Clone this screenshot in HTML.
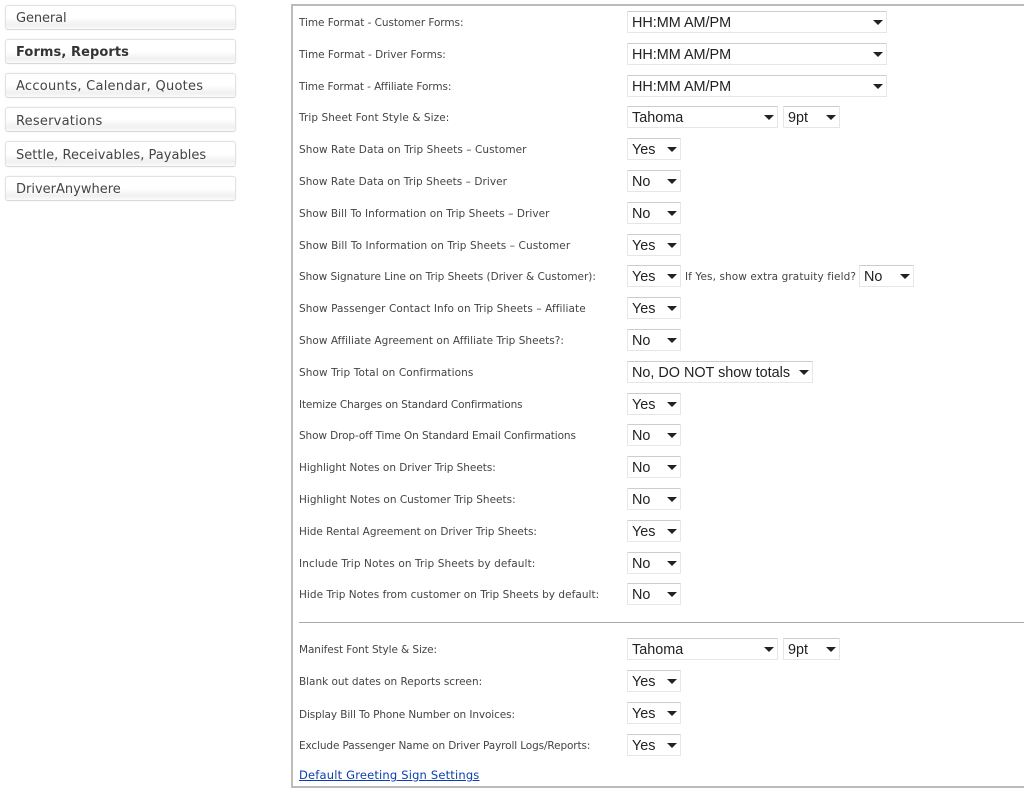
<!DOCTYPE html>
<html><head><meta charset="utf-8"><style>
html,body{margin:0;padding:0;background:#fff}
#p{position:relative;width:1024px;height:795px;overflow:hidden;background:#fff}
.n{position:absolute;left:5px;height:23px;border:1px solid #e2e2e2;border-bottom-color:#d8d8d8;border-radius:3px;box-shadow:0 0 1px #ddd;background:linear-gradient(#fff 0,#fff 50%,#f0f0f0 82%,#fbfbfb 100%);font:13px/25px "DejaVu Sans",sans-serif;color:#444;padding-left:10px;box-sizing:content-box;width:219px;white-space:nowrap}
.l{position:absolute;left:299px;font:10.5px/14px "DejaVu Sans",sans-serif;color:#444;white-space:nowrap;letter-spacing:-.03px}
.s{position:absolute;height:20px;border:1px solid #e6e6e6;border-top-color:#ccc;border-radius:1px;background:#fff;font:14.4px/22px "Liberation Sans",sans-serif;color:#222;box-sizing:content-box;white-space:nowrap}
.s span{position:absolute;left:4px;top:0}
.s i{position:absolute;right:3px;top:8px;width:0;height:0;border-left:5px solid transparent;border-right:5px solid transparent;border-top:5px solid #222}
</style></head><body><div id="p">
<div class="n" style="top:5px;letter-spacing:-.1px">General</div>
<div class="n" style="top:39px;font-weight:bold;color:#333;letter-spacing:.08px">Forms, Reports</div>
<div class="n" style="top:73px;letter-spacing:.26px">Accounts, Calendar, Quotes</div>
<div class="n" style="top:107px;line-height:27px;letter-spacing:.22px">Reservations</div>
<div class="n" style="top:141px;line-height:27px;height:24px;letter-spacing:.02px">Settle, Receivables, Payables</div>
<div class="n" style="top:176px;letter-spacing:0">DriverAnywhere</div>

<div style="position:absolute;left:291px;top:4px;width:740px;height:784px;border:2px solid #bbb;border-right:0;box-sizing:border-box"></div>
<div style="position:absolute;left:299px;top:622px;width:725px;height:1px;background:#aaa"></div>

<div class="l" style="top:16px;letter-spacing:-.065px">Time Format - Customer Forms:</div>
<div class="l" style="top:48px">Time Format - Driver Forms:</div>
<div class="l" style="top:80px;letter-spacing:-.1px">Time Format - Affiliate Forms:</div>
<div class="l" style="top:111px;letter-spacing:.07px">Trip Sheet Font Style &amp; Size:</div>
<div class="l" style="top:143px;letter-spacing:.07px">Show Rate Data on Trip Sheets – Customer</div>
<div class="l" style="top:175px;letter-spacing:.05px">Show Rate Data on Trip Sheets – Driver</div>
<div class="l" style="top:207px;letter-spacing:.05px">Show Bill To Information on Trip Sheets – Driver</div>
<div class="l" style="top:239px;letter-spacing:.09px">Show Bill To Information on Trip Sheets – Customer</div>
<div class="l" style="top:270px">Show Signature Line on Trip Sheets (Driver &amp; Customer):</div>
<div class="l" style="top:302px;letter-spacing:.08px">Show Passenger Contact Info on Trip Sheets – Affiliate</div>
<div class="l" style="top:334px;letter-spacing:.03px">Show Affiliate Agreement on Affiliate Trip Sheets?:</div>
<div class="l" style="top:366px;letter-spacing:.095px">Show Trip Total on Confirmations</div>
<div class="l" style="top:398px;letter-spacing:-.15px">Itemize Charges on Standard Confirmations</div>
<div class="l" style="top:429px;letter-spacing:-.11px">Show Drop-off Time On Standard Email Confirmations</div>
<div class="l" style="top:461px">Highlight Notes on Driver Trip Sheets:</div>
<div class="l" style="top:493px;letter-spacing:0">Highlight Notes on Customer Trip Sheets:</div>
<div class="l" style="top:525px">Hide Rental Agreement on Driver Trip Sheets:</div>
<div class="l" style="top:557px;letter-spacing:.105px">Include Trip Notes on Trip Sheets by default:</div>
<div class="l" style="top:588px;letter-spacing:.04px">Hide Trip Notes from customer on Trip Sheets by default:</div>
<div class="l" style="top:643px;letter-spacing:-.1px">Manifest Font Style &amp; Size:</div>
<div class="l" style="top:675px">Blank out dates on Reports screen:</div>
<div class="l" style="top:708px;letter-spacing:-.1px">Display Bill To Phone Number on Invoices:</div>
<div class="l" style="top:739px;letter-spacing:-.12px">Exclude Passenger Name on Driver Payroll Logs/Reports:</div>
<div class="l" style="top:768px;font-size:11.5px;letter-spacing:.18px;color:#0b3fb0;text-decoration:underline">Default Greeting Sign Settings</div>
<div class="l" style="left:685px;top:270px;letter-spacing:.09px">If Yes, show extra gratuity field?</div>

<div class="s" style="left:627px;top:11px;width:258px"><span>HH:MM AM/PM</span><i></i></div>
<div class="s" style="left:627px;top:43px;width:258px"><span>HH:MM AM/PM</span><i></i></div>
<div class="s" style="left:627px;top:75px;width:258px"><span>HH:MM AM/PM</span><i></i></div>
<div class="s" style="left:627px;top:106px;width:149px"><span>Tahoma</span><i></i></div>
<div class="s" style="left:783px;top:106px;width:55px"><span>9pt</span><i></i></div>
<div class="s" style="left:627px;top:138px;width:52px"><span>Yes</span><i></i></div>
<div class="s" style="left:627px;top:170px;width:52px"><span>No</span><i></i></div>
<div class="s" style="left:627px;top:202px;width:52px"><span>No</span><i></i></div>
<div class="s" style="left:627px;top:234px;width:52px"><span>Yes</span><i></i></div>
<div class="s" style="left:627px;top:265px;width:52px"><span>Yes</span><i></i></div>
<div class="s" style="left:859px;top:265px;width:53px"><span>No</span><i></i></div>
<div class="s" style="left:627px;top:297px;width:52px"><span>Yes</span><i></i></div>
<div class="s" style="left:627px;top:329px;width:52px"><span>No</span><i></i></div>
<div class="s" style="left:627px;top:361px;width:184px"><span>No, DO NOT show totals</span><i></i></div>
<div class="s" style="left:627px;top:393px;width:52px"><span>Yes</span><i></i></div>
<div class="s" style="left:627px;top:424px;width:52px"><span>No</span><i></i></div>
<div class="s" style="left:627px;top:456px;width:52px"><span>No</span><i></i></div>
<div class="s" style="left:627px;top:488px;width:52px"><span>No</span><i></i></div>
<div class="s" style="left:627px;top:520px;width:52px"><span>Yes</span><i></i></div>
<div class="s" style="left:627px;top:552px;width:52px"><span>No</span><i></i></div>
<div class="s" style="left:627px;top:583px;width:52px"><span>No</span><i></i></div>
<div class="s" style="left:627px;top:638px;width:149px"><span>Tahoma</span><i></i></div>
<div class="s" style="left:783px;top:638px;width:55px"><span>9pt</span><i></i></div>
<div class="s" style="left:627px;top:670px;width:52px"><span>Yes</span><i></i></div>
<div class="s" style="left:627px;top:702px;width:52px"><span>Yes</span><i></i></div>
<div class="s" style="left:627px;top:734px;width:52px"><span>Yes</span><i></i></div>
</div></body></html>
